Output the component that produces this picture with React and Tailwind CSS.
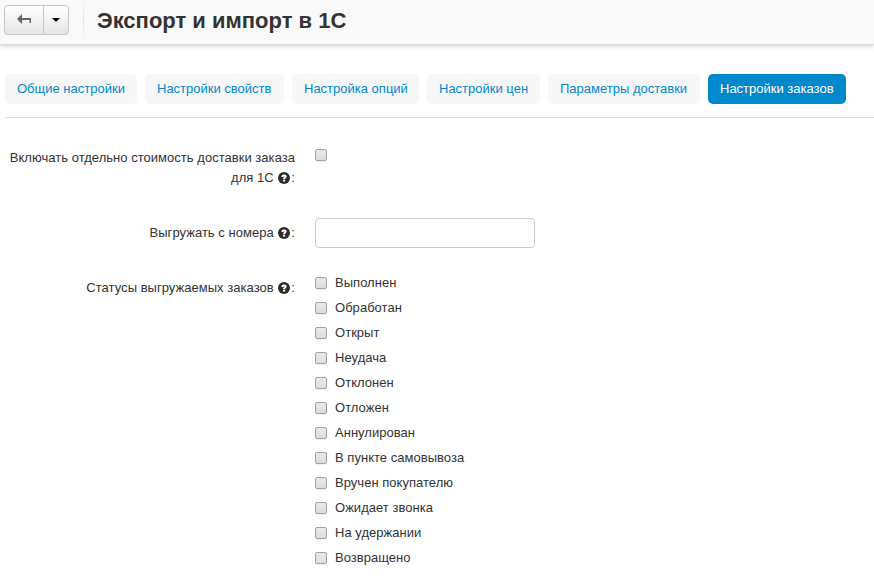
const tabs = [
  { label: 'Общие настройки', width: 'w-[132px]' },
  { label: 'Настройки свойств', width: 'w-[139px]' },
  { label: 'Настройка опций', width: 'w-[127px]' },
  { label: 'Настройки цен', width: 'w-[113px]' },
  { label: 'Параметры доставки', width: 'w-[152px]' },
  { label: 'Настройки заказов', width: 'w-[138px]', active: true },
];

const statuses = [
  'Выполнен', 'Обработан', 'Открыт', 'Неудача', 'Отклонен', 'Отложен',
  'Аннулирован', 'В пункте самовывоза', 'Вручен покупателю',
  'Ожидает звонка', 'На удержании', 'Возвращено',
];

function Checkbox() {
  return (
    <input
      type="checkbox"
      className="block size-3 shrink-0 appearance-none rounded-[2px] border border-[#a3a3a3] bg-linear-to-b from-[#e9e9e9] to-[#dcdcdc] shadow-[0_1px_0_#f0f0f0]"
    />
  );
}

function Help() {
  return (
    <svg viewBox="0 0 12 12" className="mx-px inline-block size-3 align-[-2px]">
      <circle cx="6" cy="6" r="6" fill="#2c2c2c" />
      <path d="M3.5 4.9V4.1C3.8 2.9 4.8 2.4 6.1 2.4C7.6 2.4 8.7 3.2 8.7 4.4C8.7 5.8 7.2 5.8 7.2 7H5C5 5.6 6.5 5.4 6.5 4.6C6.5 4.2 5.6 4.1 5.5 4.9ZM5 7.7H7.2V9.5H5Z" fill="#fff" />
    </svg>
  );
}

function Row({ label, children, className }) {
  return (
    <div className={'flex ' + className}>
      <div className="w-[295px] shrink-0 pl-1 text-right leading-5 tracking-[0.03px]">
        {label + ' '}<Help />:
      </div>
      <div className="ml-5">{children}</div>
    </div>
  );
}

export default function App() {
  return (
    <div className="h-[579px] w-full overflow-hidden bg-white font-['Liberation_Sans',Arial,sans-serif] text-[13px] text-[#333]">
      <header className="flex h-[44px] bg-[#f9f9f9] shadow-[0_1px_0_#dcdcdc,0_2px_4px_rgba(0,0,0,0.2)]">
        <div className="mt-[5px] ml-1 flex h-[30px] w-[65px] overflow-hidden rounded-[4px] border border-[#c5c5c5] bg-linear-to-b from-white to-[#e6e6e6]">
          <button className="flex w-[39px] items-center justify-center border-r border-[#c5c5c5]">
            <svg width="14" height="10" viewBox="0 0 14 10" className="mb-[2px]">
              <path d="M0 5L5 0V4H14V9H12.5V6H5V10Z" fill="#666" />
            </svg>
          </button>
          <button className="flex flex-1 items-center justify-center">
            <span className="border-x-4 border-t-4 border-x-transparent border-t-black" />
          </button>
        </div>
        <div className="ml-[14px] h-10 w-px bg-linear-to-b from-[#f9f9f9] via-[#e5e5e5] to-[#f9f9f9]" />
        <h1 className="mt-[6px] ml-[13px] text-[22px] leading-[30px] font-bold whitespace-nowrap">Экспорт и импорт в 1С</h1>
      </header>

      <nav className="mt-[30px] ml-[5px] flex h-11 gap-2 border-b border-[#ddd]">
        {tabs.map((t) => (
          <a
            key={t.label}
            className={
              'h-[30px] shrink-0 rounded-[5px] pl-3 leading-[30px] whitespace-nowrap ' + t.width +
              (t.active ? ' bg-[#0088cc] text-white' : ' bg-[#f7f7f7] text-[#0088cc]')
            }
          >
            {t.label}
          </a>
        ))}
      </nav>

      <Row className="mt-[30px] h-[70px]" label="Включать отдельно стоимость доставки заказа для 1С">
        <div className="pt-[1px]"><Checkbox /></div>
      </Row>
      <Row className="h-[55px] pt-[5px]" label="Выгружать с номера">
        <input type="text" className="-mt-[5px] block h-[30px] w-[220px] rounded-[4px] border border-[#ccc] bg-white px-2" />
      </Row>
      <Row className="pt-[5px]" label="Статусы выгружаемых заказов">
        <div className="-mt-[5px] flex flex-col gap-[5px]">
          {statuses.map((s) => (
            <label key={s} className="flex h-5 items-center gap-2 leading-5 tracking-[0.03px]"><Checkbox />{s}</label>
          ))}
        </div>
      </Row>
    </div>
  );
}
